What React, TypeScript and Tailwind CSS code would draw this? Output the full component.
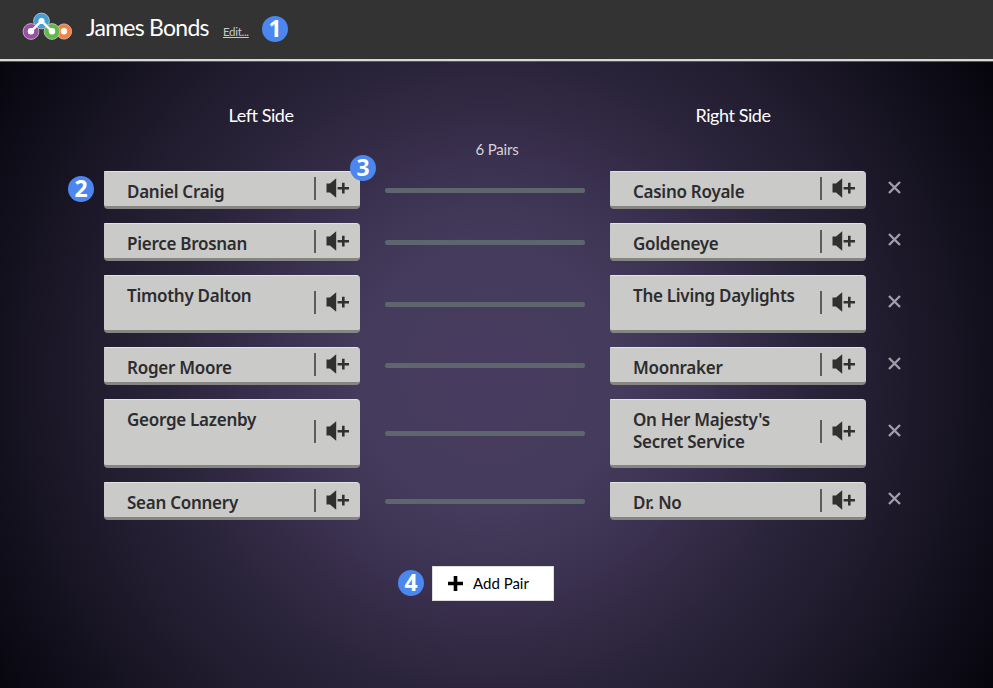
type Pair = {
  left: string;
  right: string;
  height: string;
  iconTop: string;
  lineTop: string;
  closeTop: string;
};

const pairs: Pair[] = [
  { left: "Daniel Craig", right: "Casino Royale", height: "h-[38px]", iconTop: "pt-1.5", lineTop: "pt-[17px]", closeTop: "pt-2.5" },
  { left: "Pierce Brosnan", right: "Goldeneye", height: "h-[38px]", iconTop: "pt-[7px]", lineTop: "pt-[17px]", closeTop: "pt-2.5" },
  { left: "Timothy Dalton", right: "The Living Daylights", height: "h-[58px]", iconTop: "pt-4", lineTop: "pt-[27px]", closeTop: "pt-5" },
  { left: "Roger Moore", right: "Moonraker", height: "h-[38px]", iconTop: "pt-1.5", lineTop: "pt-4", closeTop: "pt-2.5" },
  { left: "George Lazenby", right: "On Her Majesty's Secret Service", height: "h-[69px]", iconTop: "pt-[21px]", lineTop: "pt-8", closeTop: "pt-[25px]" },
  { left: "Sean Connery", right: "Dr. No", height: "h-[38px]", iconTop: "pt-[7px]", lineTop: "pt-[17px]", closeTop: "pt-2.5" },
];

function Logo() {
  return (
    <svg className="mt-3 ml-[22px] h-7 w-[51px] shrink-0" viewBox="0 0 51 28">
      <circle cx="42" cy="19.5" r="7.6" fill="#f97f3c" stroke="#ccc" strokeWidth="0.8" />
      <circle cx="42" cy="19.3" r="3.2" fill="#fff" />
      <circle cx="19.5" cy="9" r="7.9" fill="#459fd3" stroke="#ccc" strokeWidth="0.8" />
      <circle cx="9" cy="19.5" r="7.9" fill="#994fa3" stroke="#ccc" strokeWidth="0.8" />
      <circle cx="30" cy="19.5" r="7.9" fill="#64b84b" stroke="#ccc" strokeWidth="0.8" />
      <path d="M9 19.3 19.5 9 30 19.3" fill="none" stroke="#fff" strokeWidth="2.4" />
      <circle cx="19.5" cy="9" r="3" fill="#fff" />
      <circle cx="9" cy="19.3" r="3.2" fill="#fff" />
      <circle cx="30" cy="19.3" r="3.2" fill="#fff" />
    </svg>
  );
}

function Badge({ n }: { n: number }) {
  return (
    <span className="flex size-[26px] items-center justify-center rounded-full bg-[#4c86ef] pb-px font-['Noto_Sans',sans-serif] text-[23px] leading-none font-bold text-white">
      {n}
    </span>
  );
}

function Card({ text, pair }: { text: string; pair: Pair }) {
  return (
    <div className={`flex w-64 rounded-[4px] rounded-tl-[1px] border-t border-b-[3px] border-t-[#e2e2e0] border-b-[#858682] bg-[#cacac8] ${pair.height}`}>
      <p className="w-[210px] pt-[9px] pr-5 pl-[23px] font-['Noto_Sans',sans-serif] text-[17px] leading-[22px] font-semibold tracking-[-0.27px] text-[#2d2c2e]">
        {text}
      </p>
      <div className={`-mt-px flex items-start ${pair.iconTop}`}>
        <span className="h-[23px] w-[1.5px] bg-[#5c5c5c]" />
        <svg className="mt-px ml-[10px] h-5 w-6" viewBox="0 0 24 20" fill="#303030">
          <path d="M.5 5.5H4L10.2.3v19.4L4 14.5H.5z" />
          <path d="M16 4.8h2.6v4.1H23v2.5h-4.4v4.2H16v-4.2h-4.4V8.9H16z" />
        </svg>
      </div>
    </div>
  );
}

function PairRow({ pair }: { pair: Pair }) {
  return (
    <div className="flex items-start">
      <Card text={pair.left} pair={pair} />
      <div className={`flex w-[250px] px-[25px] ${pair.lineTop}`}>
        <span className="h-[5px] w-[200px] rounded-[2px] bg-[#5c666c]" />
      </div>
      <Card text={pair.right} pair={pair} />
      <div className={`pl-[22px] ${pair.closeTop}`}>
        <svg className="size-[13px]" viewBox="0 0 13 13" fill="none" stroke="#a09ca8" strokeWidth="2.4">
          <path d="m1 1 11 11M12 1 1 12" />
        </svg>
      </div>
    </div>
  );
}

export default function App() {
  return (
    <div className="flex h-[688px] w-[993px] flex-col overflow-hidden bg-black font-[Lato,sans-serif]">
      <header className="flex h-[62px] items-start border-b border-[#59595b] bg-[#333] shadow-[inset_0_-2px_0_#d9d9d4]">
        <Logo />
        <h1 className="mt-[11px] ml-[13px] w-[123px] text-[23px] leading-8 tracking-[-0.75px] whitespace-nowrap text-white">James Bonds</h1>
        <a className="mt-6 ml-[14px] w-[26px] text-[11.5px] leading-4 tracking-[-0.3px] whitespace-nowrap text-[#c8c8c8] underline">Edit...</a>
        <div className="mt-4 ml-[13px]">
          <Badge n={1} />
        </div>
      </header>
      <main className="relative flex-1 bg-[radial-gradient(circle_at_490px_316px,#473c5f_0px,#453b5c_130px,#3a304f_220px,#2a243a_320px,#231e31_380px,#14111f_490px,#06050d_590px)] pl-[104px]">
        <div className="flex pt-[39px]">
          <h2 className="w-[314px] text-center text-[18px] leading-7 tracking-[-0.45px] text-white">Left Side</h2>
          <h2 className="ml-[158px] w-[314px] text-center text-[18px] leading-7 tracking-[-0.45px] text-white">Right Side</h2>
        </div>
        <p className="mt-2 ml-[294px] h-[34px] w-[198px] text-center text-[15px] leading-6 tracking-[-0.2px] text-[#d5d3d9]">6 Pairs</p>
        <div className="flex flex-col gap-[14px]">
          {pairs.map((pair) => (
            <PairRow key={pair.left} pair={pair} />
          ))}
        </div>
        <div className="mt-[46px] ml-[294px] flex items-start">
          <div className="pt-1">
            <Badge n={4} />
          </div>
          <button className="ml-2 flex h-[35px] w-[122px] items-center border border-[#ddd] bg-white pl-[15px] text-[15px] text-black">
            <svg className="mr-[10px] size-[15px]" viewBox="0 0 15 15">
              <path d="M7.5 0v15M0 7.5h15" stroke="#000" strokeWidth="3.6" />
            </svg>
            Add Pair
          </button>
        </div>
        <div className="absolute top-[114px] left-[68px]">
          <Badge n={2} />
        </div>
        <div className="absolute top-[93px] left-[350px]">
          <Badge n={3} />
        </div>
      </main>
    </div>
  );
}
